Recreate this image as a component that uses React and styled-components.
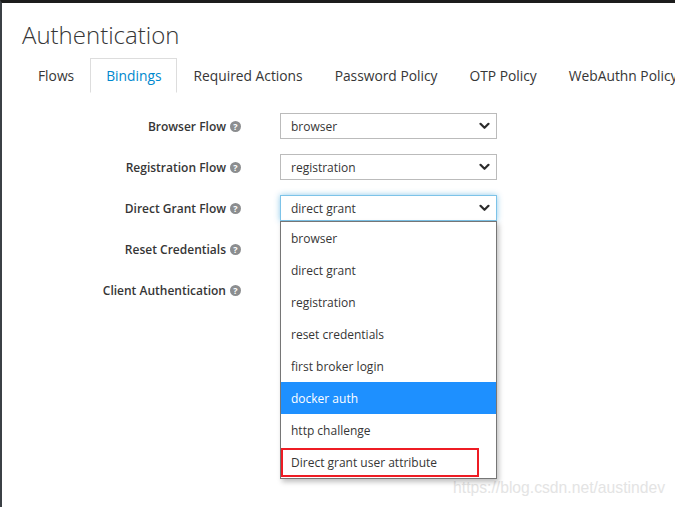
import React from 'react';
import styled, { createGlobalStyle } from 'styled-components';

const GlobalStyle = createGlobalStyle`
  html, body {
    margin: 0;
    padding: 0;
    background: #ffffff;
  }
  body {
    font-family: "Open Sans", "Liberation Sans", sans-serif;
    color: #363636;
  }
`;

const Frame = styled.div`
  position: relative;
  box-sizing: border-box;
  width: 675px;
  height: 507px;
  overflow: hidden;
  border-top: 3px solid #1c1c1c;
  border-left: 2px solid #3b4045;
  background: #fff;
`;

const Content = styled.div`
  padding: 0 0 0 20px;
`;

const Title = styled.h1`
  margin: 0;
  padding-top: 16px;
  font-size: 24px;
  line-height: 32px;
  font-weight: 300;
  color: #363636;
`;

const TabBar = styled.ul`
  display: flex;
  list-style: none;
  margin: 7px 0 0;
  padding: 0;
  border-bottom: 1px solid #dddddd;
  white-space: nowrap;
`;

const Tab = styled.li`
  box-sizing: border-box;
  height: 35px;
  margin-bottom: -1px;
  padding: 0 15px;
  display: flex;
  align-items: center;
  font-size: 13.8px;
  border: 1px solid ${(p) => (p.$active ? '#dddddd' : 'transparent')};
  border-bottom-color: ${(p) => (p.$active ? '#ffffff' : 'transparent')};
  background: #fff;
  color: ${(p) => (p.$active ? '#0088ce' : '#363636')};
  flex-shrink: 0;
`;

const Form = styled.div`
  display: grid;
  grid-template-columns: 219px 217px;
  column-gap: 39px;
  row-gap: 15px;
  margin-top: 20px;
`;

const Label = styled.label`
  display: flex;
  align-items: center;
  justify-content: flex-end;
  gap: 4px;
  font-size: 12px;
  font-weight: 600;
  color: #363636;
  height: 26px;
`;

const Help = styled.span`
  display: inline-flex;
  align-items: center;
  justify-content: center;
  width: 11px;
  height: 11px;
  border-radius: 50%;
  background: #8b8d8f;
  color: #fff;
  font-size: 9px;
  font-weight: 700;
  line-height: 1;
`;

const SelectWrap = styled.div`
  position: relative;
`;

const Select = styled.div`
  box-sizing: border-box;
  height: 26px;
  display: flex;
  align-items: center;
  justify-content: space-between;
  padding: 0 6px 0 10px;
  font-size: 12px;
  color: #363636;
  border: 1px solid ${(p) => (p.$focused ? '#7dc3e8' : '#bbbbbb')};
  box-shadow: ${(p) =>
    p.$focused ? '0 0 6px rgba(0, 136, 206, 0.45)' : 'none'};
  background: #fff;
`;

const Chevron = () => (
  <svg width="11" height="8" viewBox="0 0 11 8">
    <path
      d="M1.5 1.8 L5.5 5.8 L9.5 1.8"
      fill="none"
      stroke="#2b2b2b"
      strokeWidth="2.2"
      strokeLinecap="round"
      strokeLinejoin="round"
    />
  </svg>
);

const Menu = styled.ul`
  position: absolute;
  top: 100%;
  left: 0;
  width: 217px;
  box-sizing: border-box;
  margin: 0;
  padding: 0;
  list-style: none;
  background: #fff;
  border: 1px solid #767676;
  box-shadow: 2px 3px 5px rgba(0, 0, 0, 0.25);
  z-index: 2;
`;

const Option = styled.li`
  position: relative;
  height: 32px;
  display: flex;
  align-items: center;
  padding-left: 10px;
  font-size: 12px;
  color: ${(p) => (p.$selected ? '#ffffff' : '#363636')};
  background: ${(p) => (p.$selected ? '#1e90ff' : '#ffffff')};
`;

const Marker = styled.span`
  position: absolute;
  left: 0;
  top: 2px;
  width: 198px;
  height: 29px;
  box-sizing: border-box;
  border: 2px solid #ee1c24;
`;

const Watermark = styled.div`
  position: absolute;
  right: 10px;
  bottom: 10px;
  font-family: "Liberation Sans", Arial, sans-serif;
  font-size: 15.7px;
  color: #e4e4e4;
`;

const tabs = [
  'Flows',
  'Bindings',
  'Required Actions',
  'Password Policy',
  'OTP Policy',
  'WebAuthn Policy',
];

const fields = [
  { label: 'Browser Flow', value: 'browser' },
  { label: 'Registration Flow', value: 'registration' },
  { label: 'Direct Grant Flow', value: 'direct grant', open: true },
  { label: 'Reset Credentials' },
  { label: 'Client Authentication' },
];

const options = [
  'browser',
  'direct grant',
  'registration',
  'reset credentials',
  'first broker login',
  'docker auth',
  'http challenge',
  'Direct grant user attribute',
];

export default function App() {
  return (
    <>
      <GlobalStyle />
      <Frame>
        <Content>
          <Title>Authentication</Title>
          <TabBar>
            {tabs.map((t) => (
              <Tab key={t} $active={t === 'Bindings'}>
                {t}
              </Tab>
            ))}
          </TabBar>
          <Form>
            {fields.map((f) => (
              <React.Fragment key={f.label}>
                <Label>
                  {f.label}
                  <Help>?</Help>
                </Label>
                <SelectWrap>
                  {f.value && (
                    <Select $focused={f.open}>
                      <span>{f.value}</span>
                      <Chevron />
                    </Select>
                  )}
                  {f.open && (
                    <Menu>
                      {options.map((o) => (
                        <Option key={o} $selected={o === 'docker auth'}>
                          {o}
                          {o === 'Direct grant user attribute' && <Marker />}
                        </Option>
                      ))}
                    </Menu>
                  )}
                </SelectWrap>
              </React.Fragment>
            ))}
          </Form>
        </Content>
        <Watermark>https://blog.csdn.net/austindev</Watermark>
      </Frame>
    </>
  );
}
